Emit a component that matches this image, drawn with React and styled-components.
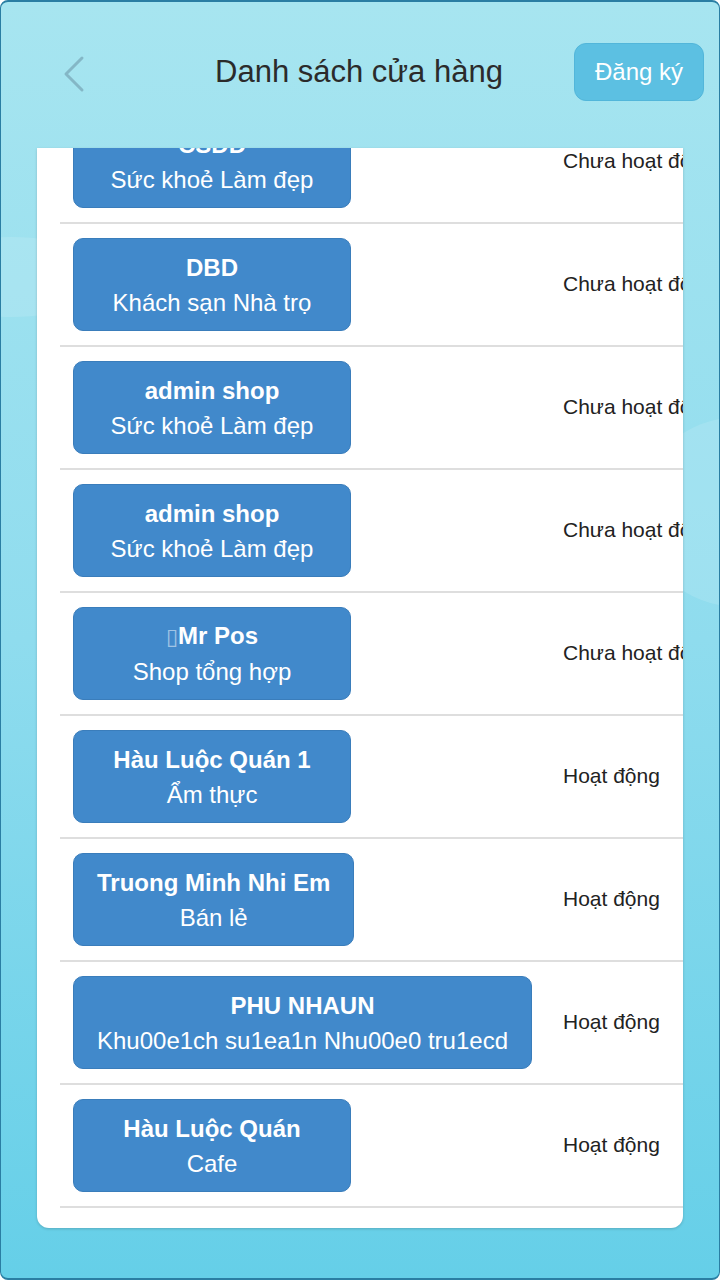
import { useEffect, useRef } from "react";
import styled, { createGlobalStyle } from "styled-components";

const shops = [
  { name: "CSDD", type: "Sức khoẻ Làm đẹp", status: "Chưa hoạt động" },
  { name: "DBD", type: "Khách sạn Nhà trọ", status: "Chưa hoạt động" },
  { name: "admin shop", type: "Sức khoẻ Làm đẹp", status: "Chưa hoạt động" },
  { name: "admin shop", type: "Sức khoẻ Làm đẹp", status: "Chưa hoạt động" },
  { name: "Mr Pos", type: "Shop tổng hợp", status: "Chưa hoạt động", missing: true },
  { name: "Hàu Luộc Quán 1", type: "Ẩm thực", status: "Hoạt động" },
  { name: "Truong Minh Nhi Em", type: "Bán lẻ", status: "Hoạt động" },
  { name: "PHU NHAUN", type: "Khu00e1ch su1ea1n Nhu00e0 tru1ecd", status: "Hoạt động" },
  { name: "Hàu Luộc Quán", type: "Cafe", status: "Hoạt động" },
];

const ShopList = () => {
  const listRef = useRef(null);

  // list is scrolled all the way down in the screenshot
  useEffect(() => {
    const el = listRef.current;
    if (el) el.scrollTop = el.scrollHeight;
  }, []);

  return (
    <>
      <GlobalStyle />
      <Screen>
        <Blob side="left" />
        <Blob side="right" />

        <Header>
          <BackButton aria-label="back">
            <svg width="26" height="40" viewBox="0 0 26 40">
              <path
                d="M21 4 L5 20 L21 36"
                fill="none"
                stroke="#84b7c6"
                strokeWidth="3"
                strokeLinecap="round"
                strokeLinejoin="round"
              />
            </svg>
          </BackButton>
          <Title>Danh sách cửa hàng</Title>
          <RegisterButton>Đăng ký</RegisterButton>
        </Header>

        <Card>
          <List ref={listRef}>
            {shops.map((shop, i) => (
              <Row key={i}>
                <NameCell>
                  <ShopButton>
                    <ShopName>
                      {shop.missing && <Tofu>▯</Tofu>}
                      {shop.name}
                    </ShopName>
                    <ShopType>{shop.type}</ShopType>
                  </ShopButton>
                </NameCell>
                <Status>{shop.status}</Status>
              </Row>
            ))}
          </List>
        </Card>
      </Screen>
    </>
  );
};

export default ShopList;

const GlobalStyle = createGlobalStyle`
  html, body {
    margin: 0;
    padding: 0;
    width: 720px;
    height: 1280px;
    overflow: hidden;
  }
  body {
    font-family: "Liberation Sans", Arial, sans-serif;
  }
`;

const Screen = styled.div`
  position: relative;
  box-sizing: border-box;
  width: 720px;
  height: 1280px;
  display: flex;
  flex-direction: column;
  overflow: hidden;
  border-radius: 8px;
  border: 2px solid #2a7ea3;
  border-width: 2px 1px 2px 1px;
  background: linear-gradient(180deg, #a7e5f0 0%, #8fdcee 50%, #65cfe8 100%);
`;

const Blob = styled.div`
  position: absolute;
  z-index: 0;
  border-radius: 50%;
  background: rgba(255, 255, 255, 0.12);
  ${(p) =>
    p.side === "left"
      ? `left: -90px; top: 235px; width: 200px; height: 80px;`
      : `right: -120px; top: 415px; width: 200px; height: 190px;`}
`;

const Header = styled.div`
  position: relative;
  z-index: 1;
  height: 146px;
  flex-shrink: 0;
  display: grid;
  grid-template-columns: 1fr auto 1fr;
  align-items: center;
  padding: 0 15px 6px 58px;
  box-sizing: border-box;
`;

const BackButton = styled.button`
  justify-self: start;
  display: flex;
  align-items: center;
  justify-content: center;
  width: 30px;
  height: 44px;
  padding: 0;
  border: none;
  background: none;
  margin-top: 4px;
`;

const Title = styled.h1`
  margin: 0;
  padding-right: 45px;
  font-size: 31px;
  font-weight: 400;
  color: #2b2b2b;
`;

const RegisterButton = styled.button`
  justify-self: end;
  width: 130px;
  height: 58px;
  border-radius: 12px;
  border: 1px solid #52b6da;
  background: #5cc0e2;
  color: #fff;
  font-family: "Liberation Sans", Arial, sans-serif;
  font-size: 24px;
`;

const Card = styled.div`
  position: relative;
  z-index: 1;
  flex: 1;
  margin: 0 36px 50px;
  background: #fff;
  border-radius: 0 0 12px 12px;
  box-shadow: 0 1px 3px rgba(0, 0, 0, 0.18);
  overflow: hidden;
  display: flex;
  flex-direction: column;
`;

const List = styled.div`
  flex: 1;
  overflow: hidden;
  padding: 0 0 20px 23px;
`;

const Row = styled.div`
  display: flex;
  align-items: center;
  width: 680px;
  height: 123px;
  box-sizing: border-box;
  border-bottom: 2px solid #dedede;
`;

const NameCell = styled.div`
  width: 490px;
  padding-left: 13px;
  box-sizing: border-box;
  flex-shrink: 0;
`;

const ShopButton = styled.div`
  display: inline-flex;
  flex-direction: column;
  align-items: center;
  justify-content: center;
  box-sizing: border-box;
  min-width: 278px;
  height: 93px;
  padding: 0 23px;
  border-radius: 10px;
  border: 1px solid #3a7dbb;
  background: #4189cb;
  color: #fff;
  font-size: 24px;
  line-height: 35px;
`;

const ShopName = styled.div`
  font-weight: 700;
  white-space: nowrap;
`;

const Tofu = styled.span`
  font-family: "DejaVu Sans", sans-serif;
  font-weight: 400;
  font-size: 22px;
  opacity: 0.5;
`;

const ShopType = styled.div`
  font-weight: 400;
  white-space: nowrap;
`;

const Status = styled.div`
  padding-left: 13px;
  padding-bottom: 2px;
  font-size: 21px;
  color: #222;
  white-space: nowrap;
`;
